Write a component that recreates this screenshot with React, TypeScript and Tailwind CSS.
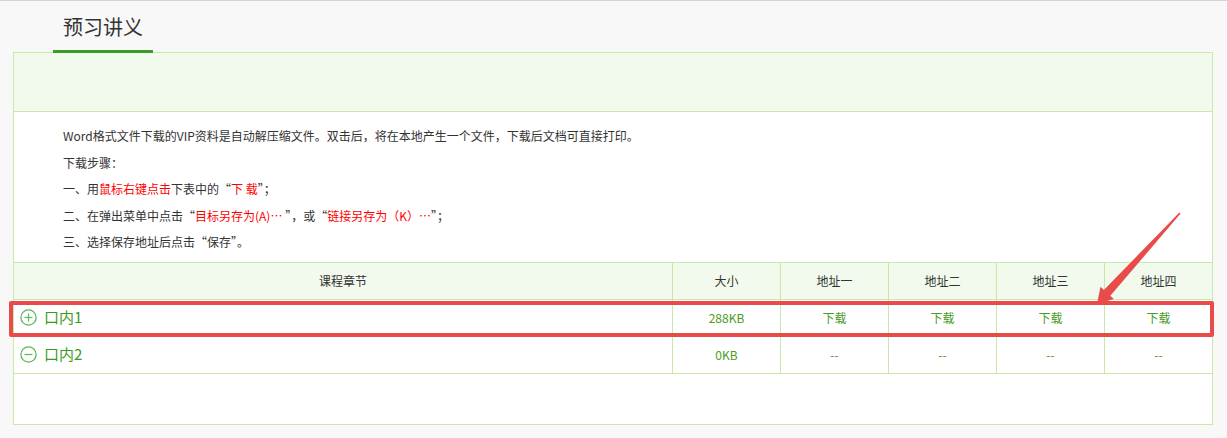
import React from 'react';

const font = { fontFamily: '"Microsoft YaHei", "Noto Sans CJK SC", "Noto Sans", sans-serif' };

function CircleIcon({ minus }: { minus?: boolean }) {
  return (
    <svg width="17" height="17" viewBox="0 0 17 17" className="shrink-0">
      <circle cx="8.5" cy="8.5" r="7.6" fill="none" stroke="#5cb85c" strokeWidth="1.3" />
      <line x1="4.5" y1="8.5" x2="12.5" y2="8.5" stroke="#5cb85c" strokeWidth="1.2" />
      {!minus && <line x1="8.5" y1="4.5" x2="8.5" y2="12.5" stroke="#5cb85c" strokeWidth="1.2" />}
    </svg>
  );
}

const rows = [
  { name: '口内1', size: '288KB', links: ['下载', '下载', '下载', '下载'], open: false },
  { name: '口内2', size: '0KB', links: ['--', '--', '--', '--'], open: true },
];

export default function App() {
  return (
    <div
      className="relative h-[438px] w-[1227px] overflow-hidden border-t border-[#d4d4d4] bg-[#f8f8f8] text-[#333]"
      style={font}
    >
      {/* Tab */}
      <div className="relative z-10 h-[52px] pl-[53px]">
        <div className="flex h-full w-[100px] items-center justify-center border-b-[3px] border-[#3c9a26] pt-[3px] text-[20px] text-[#333]">
          预习讲义
        </div>
      </div>

      {/* Box */}
      <div className="-mt-px ml-[13px] w-[1200px] border border-[#cbe8a9] bg-white">
        <div className="h-[59px] border-b border-[#cbe8a9] bg-[#f1faed]"></div>

        <div className="pb-[6px] pl-[49px] pt-[11px] text-[12px] leading-[26.5px]">
          <p>Word格式文件下载的VIP资料是自动解压缩文件。双击后，将在本地产生一个文件，下载后文档可直接打印。</p>
          <p>下载步骤：</p>
          <p>
            一、用<span className="text-[#f00]">鼠标右键点击</span>下表中的“<span className="text-[#f00]">下 载</span>”；
          </p>
          <p>
            二、在弹出菜单中点击“<span className="text-[#f00]">目标另存为(A)…</span> ”，或“
            <span className="text-[#f00]">链接另存为（K）…</span>”；
          </p>
          <p>三、选择保存地址后点击“保存”。</p>
        </div>

        {/* Table */}
        <div className="border-t border-[#cbe8a9] text-[12px]">
          <div className="flex h-[37px] border-b border-[#cbe8a9] bg-[#f1faed]">
            <div className="flex w-[658px] items-center justify-center">课程章节</div>
            {['大小', '地址一', '地址二', '地址三'].map((h) => (
              <div key={h} className="flex w-[108px] items-center justify-center border-l border-[#cbe8a9]">
                {h}
              </div>
            ))}
            <div className="flex flex-1 items-center justify-center border-l border-[#cbe8a9]">地址四</div>
          </div>
          {rows.map((r) => (
            <div key={r.name} className="flex h-[37px] border-b border-[#cbe8a9] text-[#4b9b24]">
              <div className="flex w-[658px] items-center gap-[7px] pl-[6px]">
                <CircleIcon minus={r.open} />
                <span className="text-[15px] text-[#3b9a1c]">{r.name}</span>
              </div>
              <div className="flex w-[108px] items-center justify-center border-l border-[#cbe8a9]">{r.size}</div>
              {r.links.slice(0, 3).map((l, i) => (
                <div key={i} className="flex w-[108px] items-center justify-center border-l border-[#cbe8a9]">
                  {l}
                </div>
              ))}
              <div className="flex flex-1 items-center justify-center border-l border-[#cbe8a9]">{r.links[3]}</div>
            </div>
          ))}
        </div>
        <div className="h-[50px]"></div>
      </div>

      {/* highlight annotation */}
      <div className="pointer-events-none absolute left-[9px] top-[300px] h-[36px] w-[1205px] rounded-[2px] border-4 border-[#e94b4b]"></div>
      <svg className="pointer-events-none absolute left-0 top-0" width="1227" height="438" viewBox="0 0 1227 438">
        <polygon
          points="1180.6,212.6 1110.3,294.8 1113.8,298 1097,303 1100.5,285.8 1103.9,289 1179.4,211.4"
          fill="#e94b4b"
        />
      </svg>
    </div>
  );
}
